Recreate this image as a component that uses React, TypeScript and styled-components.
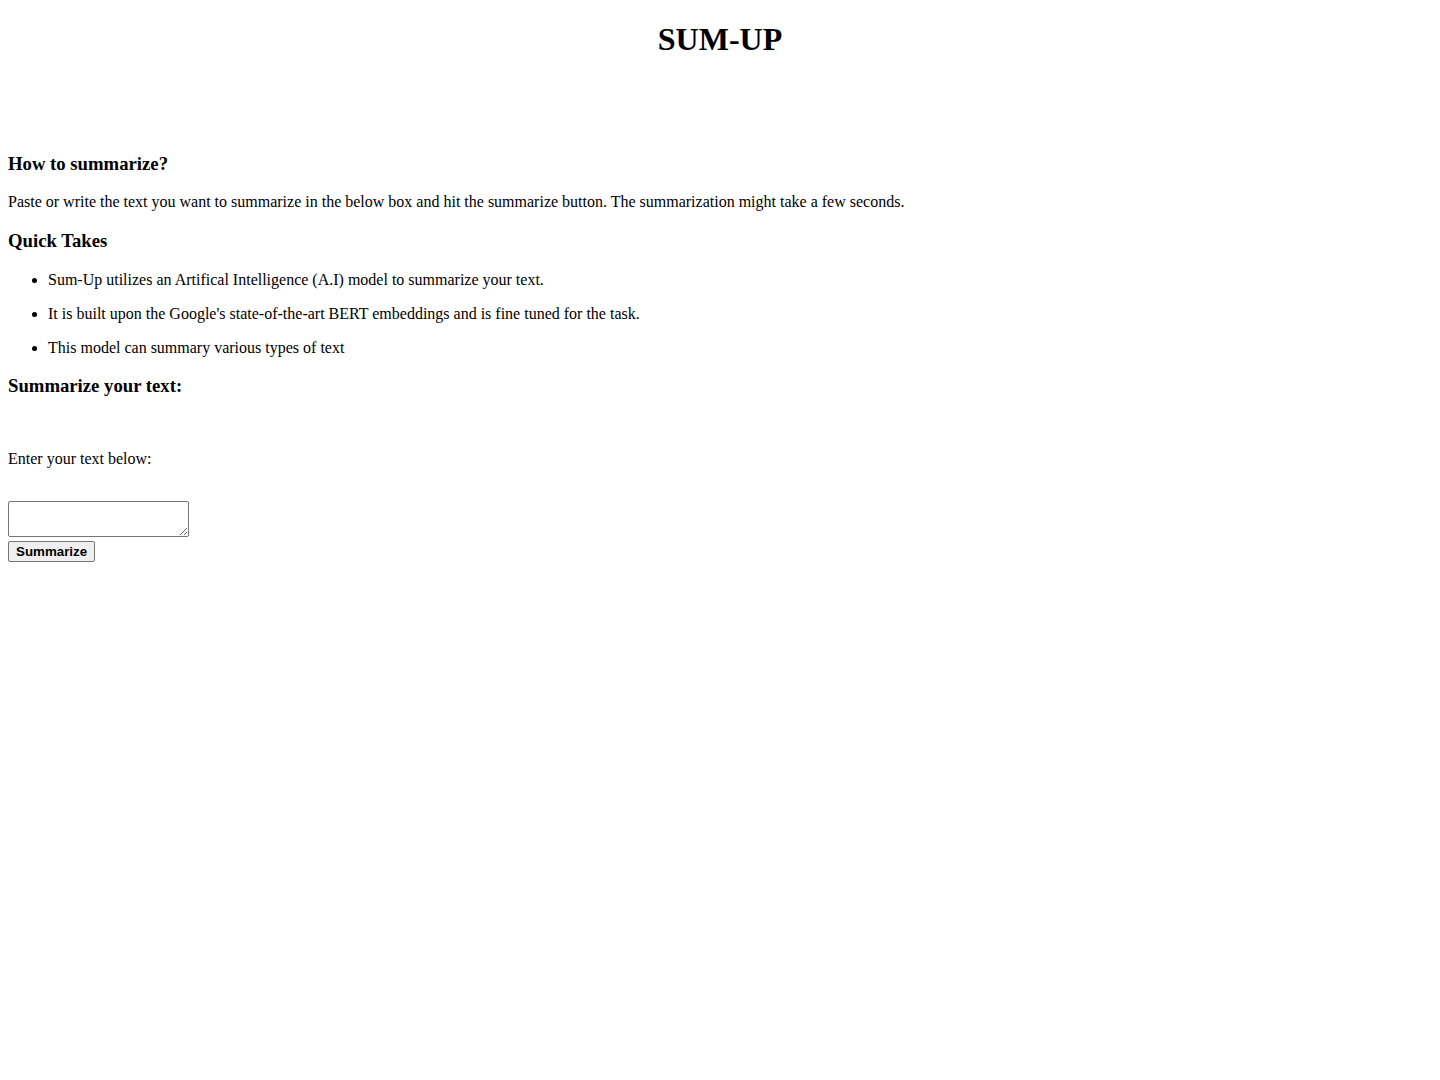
import React from 'react';
import styled, { createGlobalStyle } from 'styled-components';

let GlobalStyle = createGlobalStyle`
  body {
    margin: 0 8px 8px;
    font-family: "Liberation Serif", "Times New Roman", serif;
    font-size: 16px;
    color: #000;
    background: #fff;
  }`

let Title = styled.h1`
  text-align: center;
  font-size: 2em;
  font-weight: bold;
  margin: 0.67em 0;`

let Spacer = styled.div`
  height: 54px;`

let SectionTitle = styled.h3`
  font-size: 1.17em;
  font-weight: bold;
  margin: 1em 0;`

let Text = styled.p`
  margin: 1em 0;`

let Takes = styled.ul`
  margin: 1em 0;
  padding-left: 40px;`

let Gap = styled.div`
  height: 17.6px;`

let SummaryForm = styled.form`
  margin: 0;`

let TextBox = styled.textarea`
  font-family: "Liberation Mono", monospace;
  font-size: 13.33px;
  width: 175px;
  height: 30px;
  padding: 2px;
  border: 1px solid #767676;
  border-radius: 2px;
  vertical-align: baseline;`

let SubmitButton = styled.button`
  font-family: "Liberation Sans", Arial, sans-serif;
  font-size: 13.33px;
  font-weight: bold;
  padding: 2px 7px;
  border: 1px solid #767676;
  border-radius: 2px;
  background: #efefef;
  color: #000;`

let takes = [
  "Sum-Up utilizes an Artifical Intelligence (A.I) model to summarize your text.",
  "It is built upon the Google's state-of-the-art BERT embeddings and is fine tuned for the task.",
  "This model can summary various types of text",
];

export default function App() {
  return (
    <>
      <GlobalStyle />
      <Title>SUM-UP</Title>
      <Spacer />
      <SectionTitle>How to summarize?</SectionTitle>
      <Text>Paste or write the text you want to summarize in the below box and hit the summarize button. The summarization might take a few seconds.</Text>
      <SectionTitle>Quick Takes</SectionTitle>
      <Takes>
        {takes.map((t) => (
          <li key={t}><Text>{t}</Text></li>
        ))}
      </Takes>
      <SectionTitle>Summarize your text:</SectionTitle>
      <SummaryForm onSubmit={(e) => e.preventDefault()}>
        <Gap />
        <Text>Enter your text below:</Text>
        <Gap />
        <TextBox />
        <br />
        <SubmitButton type="submit">Summarize</SubmitButton>
      </SummaryForm>
    </>
  );
}
